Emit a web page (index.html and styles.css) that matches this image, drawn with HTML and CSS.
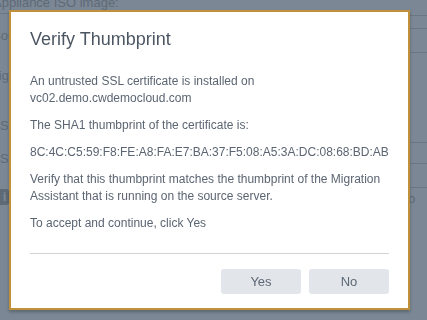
FILE: index.html
```html
<!DOCTYPE html>
<html lang="en">

<head>
  <meta charset="UTF-8">
  <title>Verify Thumbprint</title>
  <link rel="stylesheet" href="styles.css">
</head>

<body>
  <div class="page">
    <div class="col-left">
      <div class="lbl lbl-top">Appliance ISO image:</div>
      <div class="lbl lbl-a">Source</div>
      <div class="lbl lbl-b">Migration</div>
      <div class="lbl lbl-c">SSO</div>
      <div class="lbl lbl-d">SSO</div>
      <div class="info">i</div>
    </div>
    <div class="col-mid"></div>
    <div class="col-right">
      <div class="ln ln-1"></div>
      <div class="ln ln-2"></div>
      <div class="ln ln-3"></div>
      <div class="ln ln-4"></div>
      <div class="ln ln-5"></div>
      <div class="ln ln-6"></div>
      <div class="tail">All b</div>
    </div>
  </div>

  <div class="modal">
    <h2 class="modal-title">Verify Thumbprint</h2>

    <div class="modal-body">
      <p>An untrusted SSL certificate is installed on<br>vc02.demo.cwdemocloud.com</p>
      <p>The SHA1 thumbprint of the certificate is:</p>
      <p>8C:4C:C5:59:F8:FE:A8:FA:E7:BA:37:F5:08:A5:3A:DC:08:68:BD:AB</p>
      <p>Verify that this thumbprint matches the thumbprint of the Migration Assistant that is running on the source server.</p>
      <p>To accept and continue, click Yes</p>
    </div>

    <div class="modal-footer">
      <button class="btn">Yes</button>
      <button class="btn">No</button>
    </div>
  </div>
</body>

</html>
```

FILE: styles.css
```css
body {
  margin: 0;
  padding: 0;
  font-family: 'Liberation Sans', Arial, sans-serif;
  background-color: #7b8794;
  color: #5d6875;
  overflow: hidden;
}

/* faded page behind the dialog */
.page {
  height: 320px;
  display: grid;
  grid-template-columns: 120px 1fr 30px;
  font-size: 13px;
  color: #5f6a77;
}

.col-left {
  display: flex;
  flex-direction: column;
  white-space: nowrap;
}

.lbl {
  line-height: 14px;
}

.lbl-top {
  margin-top: -4px;
  margin-left: -7px;
  padding-bottom: 3px;
  border-bottom: 1px solid #6c7784;
}

.lbl-a {
  margin-top: 15px;
  margin-left: -8px;
}

.lbl-b {
  margin-top: 26px;
  margin-left: -12px;
}

.lbl-c {
  margin-top: 36px;
}

.lbl-d {
  margin-top: 19px;
}

.info {
  width: 9px;
  height: 16px;
  margin-top: 23px;
  border-radius: 0 3px 3px 0;
  background-color: #5f6a77;
  color: #7b8794;
  font-weight: bold;
  text-align: center;
  line-height: 16px;
}

.col-right {
  display: flex;
  flex-direction: column;
  white-space: nowrap;
}

.ln {
  border-bottom: 1px solid #6c7784;
}

.ln-1 {
  height: 15px;
}

.ln-2 {
  height: 12px;
}

.ln-3 {
  height: 23px;
}

.ln-4 {
  height: 89px;
}

.ln-5 {
  height: 20px;
}

.ln-6 {
  height: 23px;
}

.tail {
  margin-top: 4px;
  margin-left: -7px;
  line-height: 14px;
}

/* dialog */
.modal {
  position: fixed;
  left: 9px;
  top: 10px;
  width: 359px;
  height: 296px;
  padding: 0 19px;
  background-color: #fff;
  border: 2px solid #c1903a;
  box-shadow: 0 2px 3px rgba(0, 0, 0, 0.25);
  display: flex;
  flex-direction: column;
}

.modal-title {
  margin: 16px 0 0;
  font-size: 18px;
  font-weight: normal;
  color: #4c5663;
  line-height: 22px;
}

.modal-body {
  margin-top: 23px;
  font-size: 12px;
  line-height: 17px;
  color: #5b6572;
  border-bottom: 1px solid #d3d3d3;
  padding-bottom: 21px;
}

.modal-body p {
  margin: 0 0 10px;
}

.modal-body p:last-child {
  margin-bottom: 0;
}

.modal-footer {
  display: flex;
  justify-content: flex-end;
  gap: 8px;
  margin-top: 15px;
}

.btn {
  width: 80px;
  height: 25px;
  border: none;
  border-radius: 3px;
  background-color: #e2e6ea;
  color: #5d6774;
  font-family: 'Liberation Sans', Arial, sans-serif;
  font-size: 13px;
  cursor: pointer;
}
```
